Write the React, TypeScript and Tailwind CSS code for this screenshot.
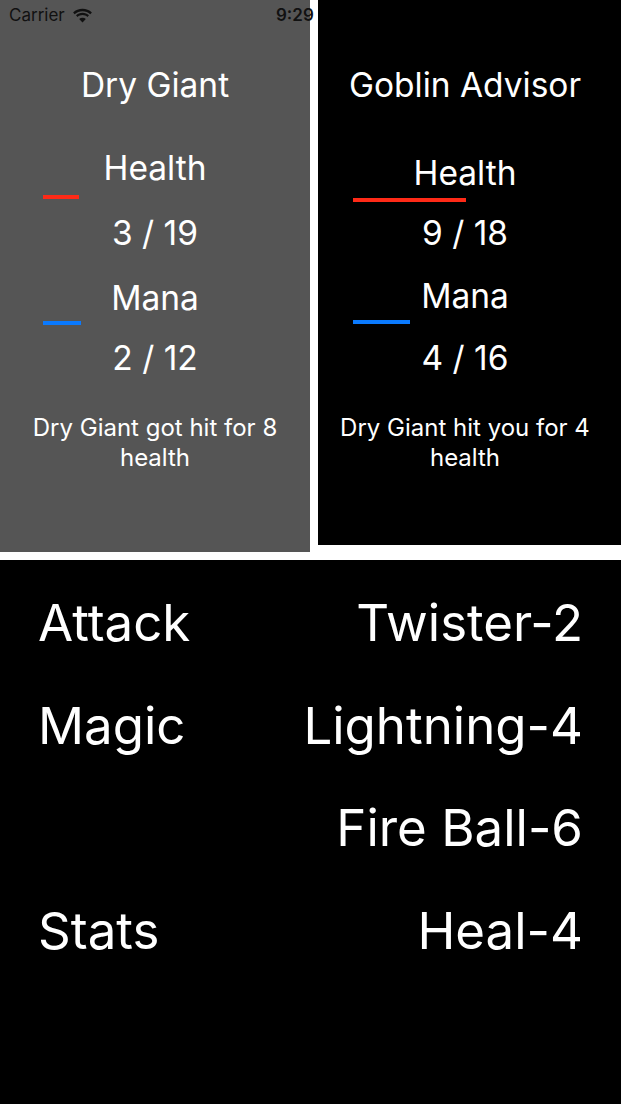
import React from "react";

type Stat = { label: string; value: number; max: number; color: string };

// pixel width of a full bar
const BAR_FULL = 226;

function Bar({ stat }: { stat: Stat }) {
  return (
    <div
      className="h-[4px]"
      style={{ width: (stat.value / stat.max) * BAR_FULL, backgroundColor: stat.color }}
    />
  );
}

function WifiIcon() {
  return (
    <svg width="21" height="15" viewBox="0 0 21 15" className="ml-[7px]">
      <path d="M10.5 3.2c3 0 5.7 1.1 7.8 3l1.6-1.7C17.4 2.1 14.1.8 10.5.8S3.6 2.1 1.1 4.5l1.6 1.7c2.1-1.9 4.8-3 7.8-3z" fill="#111" />
      <path d="M10.5 7.1c1.9 0 3.6.7 4.9 1.8l1.6-1.7c-1.7-1.5-4-2.5-6.5-2.5S5.7 5.700 4 7.2l1.6 1.7c1.3-1.1 3-1.8 4.9-1.8z" fill="#111" />
      <path d="M10.5 14.5l3.3-3.5c-.9-.8-2-1.2-3.3-1.2s-2.4.4-3.3 1.2z" fill="#111" />
    </svg>
  );
}

function StatusBar() {
  return (
    <div className="absolute top-0 left-0 w-[621px] h-[30px] text-[#111] text-[17px]">
      <div className="absolute left-[9px] top-[4px] flex items-center leading-[22px]">
        <span>Carrier</span>
        <WifiIcon />
      </div>
      <span className="absolute left-[276px] top-[4px] leading-[22px] font-semibold">9:29</span>
    </div>
  );
}

type PanelProps = {
  name: string;
  health: Stat;
  mana: Stat;
  message: string;
  className: string;
  barPad: string;
  gaps: string[];
};

function Panel({ name, health, mana, message, className, barPad, gaps }: PanelProps) {
  return (
    <div className={`flex flex-col pt-[65px] text-white ${className}`}>
      <div className="text-center text-[33.5px] leading-[40px]">{name}</div>
      <div className={`text-center text-[33.5px] leading-[40px] ${gaps[0]}`}>{health.label}</div>
      <div className={`${barPad} ${gaps[1]}`}>
        <Bar stat={health} />
      </div>
      <div className={`text-center text-[33.5px] leading-[40px] ${gaps[2]}`}>
        {health.value} / {health.max}
      </div>
      <div className={`text-center text-[33.5px] leading-[40px] ${gaps[3]}`}>{mana.label}</div>
      <div className={`${barPad} ${gaps[4]}`}>
        <Bar stat={mana} />
      </div>
      <div className={`text-center text-[33.5px] leading-[40px] ${gaps[5]}`}>
        {mana.value} / {mana.max}
      </div>
      <div className="mt-[35px] px-[14px] text-center text-[24px] leading-[30px]">{message}</div>
    </div>
  );
}

const RED = "#ff2a17";
const BLUE = "#0a7aff";

const actions = [
  ["Attack", "Twister-2"],
  ["Magic", "Lightning-4"],
  ["", "Fire Ball-6"],
  ["Stats", "Heal-4"],
];

export default function App() {
  return (
    <div
      className="relative w-[621px] h-[1104px] bg-white flex flex-col overflow-hidden"
      style={{ fontFamily: "Inter, 'Noto Sans', sans-serif" }}
    >
      <div className="flex gap-[8px] items-start">
        <Panel
          name="Dry Giant"
          health={{ label: "Health", value: 3, max: 19, color: RED }}
          mana={{ label: "Mana", value: 2, max: 12, color: BLUE }}
          message="Dry Giant got hit for 8 health"
          className="w-[310px] h-[552px] bg-[#555555]"
          barPad="pl-[43px]"
          gaps={["mt-[43px]", "mt-[7px]", "mt-[14px]", "mt-[25px]", "mt-[3px]", "mt-[13px]"]}
        />
        <Panel
          name="Goblin Advisor"
          health={{ label: "Health", value: 9, max: 18, color: RED }}
          mana={{ label: "Mana", value: 4, max: 16, color: BLUE }}
          message="Dry Giant hit you for 4 health"
          className="flex-1 h-[545px] bg-black pr-[9px]"
          barPad="pl-[35px]"
          gaps={["mt-[48px]", "mt-[5px]", "mt-[11px]", "mt-[23px]", "mt-[4px]", "mt-[14px]"]}
        />
      </div>

      <div className="mt-[8px] flex-1 bg-black text-white pt-[12px] px-[38px]">
        {actions.map(([left, right], i) => (
          <div key={i} className="flex justify-between items-center h-[102.5px] text-[51px] leading-[60px]">
            <span>{left}</span>
            <span>{right}</span>
          </div>
        ))}
      </div>

      <StatusBar />
    </div>
  );
}
